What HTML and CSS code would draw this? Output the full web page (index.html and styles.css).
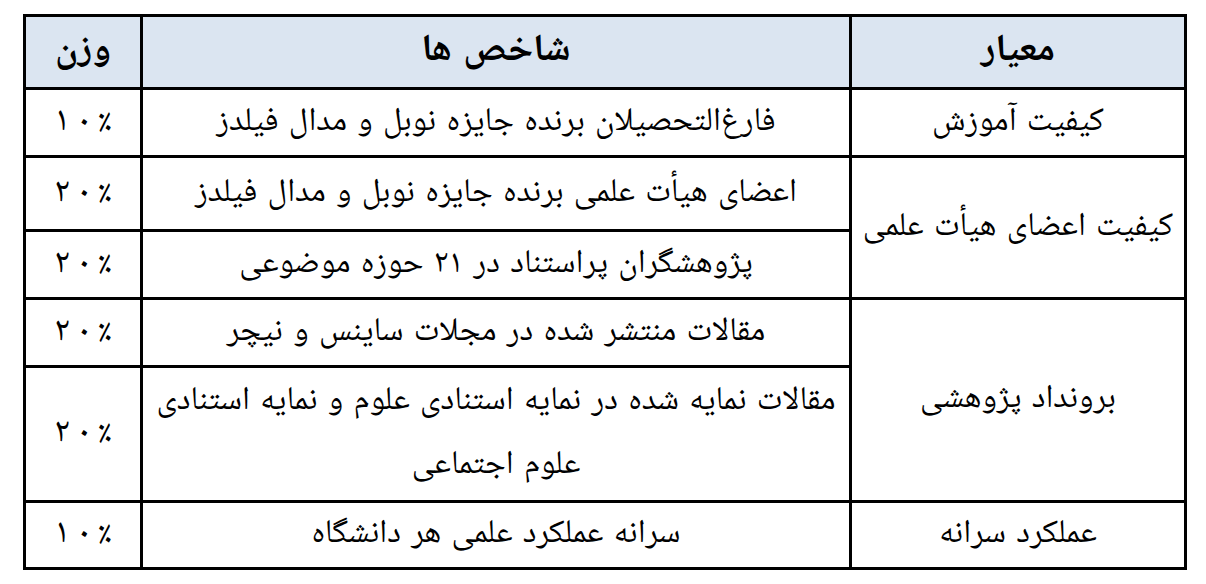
FILE: index.html
```html
<!DOCTYPE html>
<html lang="fa">
<head>
<meta charset="utf-8">
<title>جدول شاخص ها</title>
<link rel="stylesheet" href="styles.css">
</head>
<body>
<div class="page">
<table class="grid" dir="rtl">
  <tr class="head">
    <th class="crit">معیار</th>
    <th class="ind">شاخص ها</th>
    <th class="w">وزن</th>
  </tr>
  <tr class="r1">
    <td class="crit">کیفیت آموزش</td>
    <td class="ind">فارغ‌التحصیلان برنده جایزه نوبل و مدال فیلدز</td>
    <td class="w"><span class="d">۱</span><span class="d">۰</span><span class="d">٪</span></td>
  </tr>
  <tr class="r2">
    <td class="crit" rowspan="2">کیفیت اعضای هیأت علمی</td>
    <td class="ind">اعضای هیأت علمی برنده جایزه نوبل و مدال فیلدز</td>
    <td class="w"><span class="d">۲</span><span class="d">۰</span><span class="d">٪</span></td>
  </tr>
  <tr class="r3">
    <td class="ind">پژوهشگران پراستناد در ۲۱ حوزه موضوعی</td>
    <td class="w"><span class="d">۲</span><span class="d">۰</span><span class="d">٪</span></td>
  </tr>
  <tr class="r4">
    <td class="crit" rowspan="2">برونداد پژوهشی</td>
    <td class="ind">مقالات منتشر شده در مجلات ساینس و نیچر</td>
    <td class="w"><span class="d">۲</span><span class="d">۰</span><span class="d">٪</span></td>
  </tr>
  <tr class="r5">
    <td class="ind">مقالات نمایه شده در نمایه استنادی علوم و نمایه استنادی علوم اجتماعی</td>
    <td class="w"><span class="d">۲</span><span class="d">۰</span><span class="d">٪</span></td>
  </tr>
  <tr class="r6">
    <td class="crit">عملکرد سرانه</td>
    <td class="ind">سرانه عملکرد علمی هر دانشگاه</td>
    <td class="w"><span class="d">۱</span><span class="d">۰</span><span class="d">٪</span></td>
  </tr>
</table>
</div>
</body>
</html>
```
FILE: styles.css
```css
html, body {
  margin: 0;
  padding: 0;
  background: #ffffff;
}
.page {
  padding: 14px 0 0 23px;
}
.grid {
  border-collapse: separate;
  border-spacing: 0;
  table-layout: fixed;
  width: 1164px;
  border: 3px solid #000;
  font-family: "Noto Naskh Arabic", "Noto Sans Arabic", "DejaVu Sans", sans-serif;
  font-size: 33px;
  word-spacing: 3px;
  color: #000;
}
.grid th,
.grid td {
  box-sizing: border-box;
  padding: 0 6px;
  text-align: center;
  vertical-align: middle;
  line-height: 64px;
  border-left: 3px solid #000;
}
.grid td {
  border-top: 3px solid #000;
}
.grid .w {
  border-left: none;
}
.grid td.w {
  font-size: 35px;
}
.grid td.w .d {
  padding: 0 3px;
}
.grid th {
  font-weight: bold;
  font-size: 38px;
  background: #dbe5f1;
}
.grid th.crit { width: 335px; }
.grid th.ind { width: 709px; }
.grid th.w { width: 114px; }
.head { height: 70px; }
.r1 { height: 68px; }
.r2 { height: 74px; }
.r3 { height: 68px; }
.r4 { height: 68px; }
.r5 { height: 135px; }
.r6 { height: 67px; }
```
